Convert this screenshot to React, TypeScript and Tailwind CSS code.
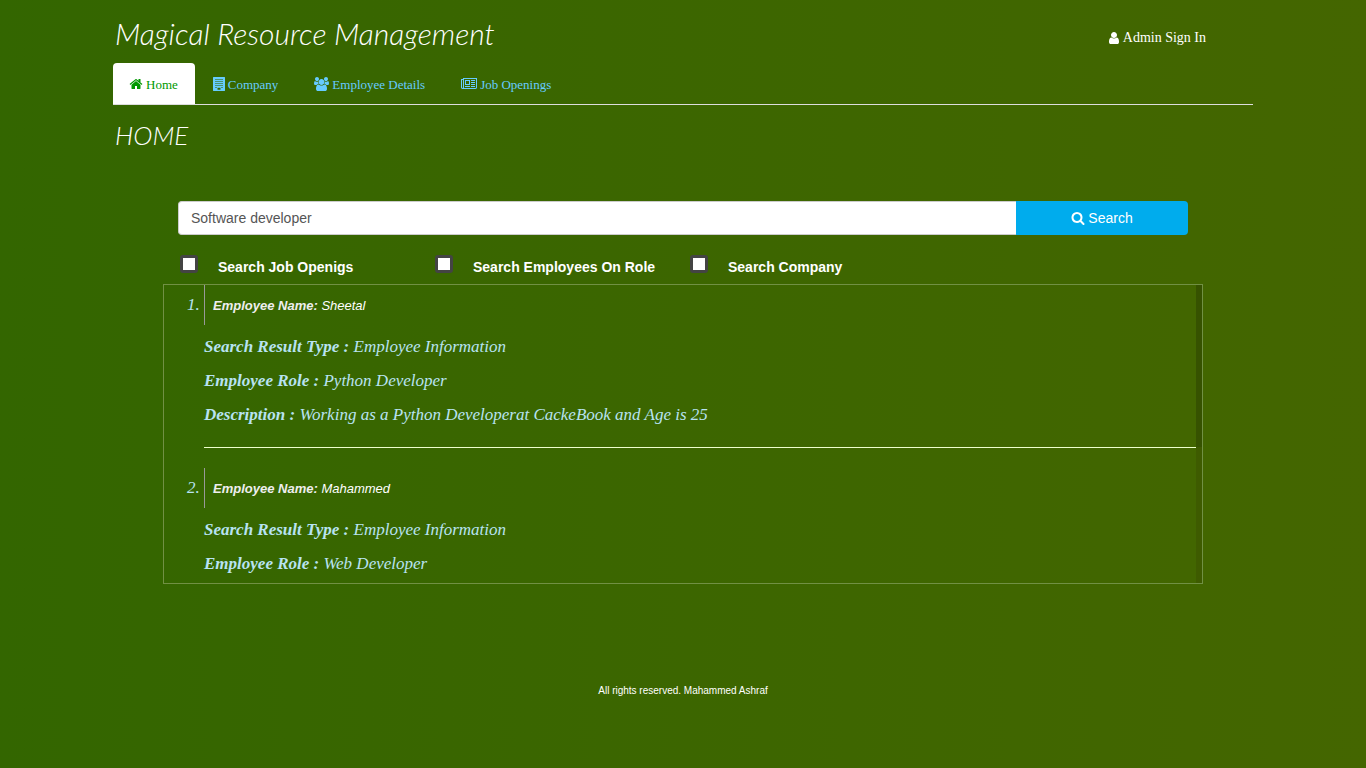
import { useState } from "react";

type IconProps = { width: number; d: string; className: string };

function Icon({ width, d, className }: IconProps) {
  return (
    <svg viewBox={`0 0 ${width} 1792`} fill="currentColor" fillRule="evenodd" aria-hidden="true" className={className}>
      <path d={d} />
    </svg>
  );
}

const homePath =
  "M1472 992v480q0 26-19 45t-45 19h-384v-384h-256v384h-384q-26 0-45-19t-19-45v-480q0-1 .5-3t.5-3l575-474 575 474q1 2 1 6zm223-69l-62 74q-8 9-21 11h-3q-13 0-21-7l-692-577-692 577q-12 8-24 7-13-2-21-11l-62-74q-8-10-7-23.5t11-21.5l719-599q32-26 76-26t76 26l244 204v-195q0-14 9-23t23-9h192q14 0 23 9t9 23v408l219 182q10 8 11 21.5t-7 23.5z";
const buildingPath =
  "M64 0h1408q26 0 45 19t19 45v1664q0 26-19 45t-45 19h-1408q-26 0-45-19t-19-45v-1664q0-26 19-45t45-19zM288 256v96h192v-96zM544 256v96h192v-96zM800 256v96h192v-96zM1056 256v96h192v-96zM288 512v96h192v-96zM544 512v96h192v-96zM800 512v96h192v-96zM1056 512v96h192v-96zM288 768v96h192v-96zM544 768v96h192v-96zM800 768v96h192v-96zM1056 768v96h192v-96zM288 1024v96h192v-96zM544 1024v96h192v-96zM800 1024v96h192v-96zM1056 1024v96h192v-96zM288 1280v96h192v-96zM1056 1280v96h192v-96zM576 1376v256h384v-256z";
const usersPath =
  "M593 896q-162 5-265 128h-134q-82 0-138-40.5t-56-118.5q0-353 124-353 6 0 43.5 21t97.5 42.5 119 21.5q67 0 133-23-5 37-5 66 0 139 81 256zm1071 637q0 120-73 189.5t-194 69.5h-874q-121 0-194-69.5t-73-189.5q0-53 3.5-103.5t14-109 26.5-108.5 43-97.5 62-81 85.5-53.5 111.5-20q10 0 43 21.5t73 48 107 48 135 21.5 135-21.5 107-48 73-48 43-21.5q61 0 111.5 20t85.5 53.5 62 81 43 97.5 26.5 108.5 14 109 3.5 103.5zm-1024-1277q0 106-75 181t-181 75-181-75-75-181 75-181 181-75 181 75 75 181zm704 384q0 159-112.5 271.5t-271.5 112.5-271.5-112.5-112.5-271.5 112.5-271.5 271.5-112.5 271.5 112.5 112.5 271.5zm576 225q0 78-56 118.5t-138 40.5h-134q-103-123-265-128 81-117 81-256 0-29-5-66 66 23 133 23 59 0 119-21.5t97.5-42.5 43.5-21q124 0 124 353zm-128-609q0 106-75 181t-181 75-181-75-75-181 75-181 181-75 181 75 75 181z";
const newsPath =
  "M1024 512h-384v384h384v-384zm128 640v128h-640v-128h640zm0-768v640h-640v-640h640zm640 768v128h-512v-128h512zm0-256v128h-512v-128h512zm0-256v128h-512v-128h512zm0-256v128h-512v-128h512zm-1536 960v-960h-128v960q0 26 19 45t45 19 45-19 19-45zm1664 0v-1088h-1536v1088q0 33-11 64h1483q26 0 45-19t19-45zm128-1216v1216q0 80-56 136t-136 56h-1664q-80 0-136-56t-56-136v-1088h256v-128h1792z";
const userPath =
  "M1536 1399q0 109-62.5 187t-150.5 78h-854q-88 0-150.5-78t-62.5-187q0-85 8.5-160.5t31.5-152 58.5-131 94-89 134.5-34.5q131 128 313 128t313-128q76 0 134.5 34.5t94 89 58.5 131 31.5 152 8.5 160.5zm-256-887q0 159-112.5 271.5t-271.5 112.5-271.5-112.5-112.5-271.5 112.5-271.5 271.5-112.5 271.5 112.5 112.5 271.5z";
const searchPath =
  "M1216 832q0-185-131.5-316.5t-316.5-131.5-316.5 131.5-131.5 316.5 131.5 316.5 316.5 131.5 316.5-131.5 131.5-316.5zm512 832q0 52-38 90t-90 38q-54 0-90-38l-343-342q-179 124-399 124-143 0-273.5-55.5t-225-150-150-225-55.5-273.5 55.5-273.5 150-225 225-150 273.5-55.5 273.5 55.5 225 150 150 225 55.5 273.5q0 220-124 399l343 343q37 37 37 90z";

const tabs = [
  { label: "Home", path: homePath, width: 1792, size: "h-[14px] w-[14px]", active: true },
  { label: "Company", path: buildingPath, width: 1536, size: "h-[14px] w-[12px]", active: false },
  { label: "Employee Details", path: usersPath, width: 1920, size: "h-[14px] w-[15px]", active: false },
  { label: "Job Openings", path: newsPath, width: 2048, size: "h-[14px] w-[16px]", active: false },
];

const filters = [
  { id: "filter-jobs", label: "Search Job Openigs" },
  { id: "filter-roles", label: "Search Employees On Role" },
  { id: "filter-company", label: "Search Company" },
];

const results = [
  {
    name: "Sheetal",
    details: [
      ["Search Result Type :", "Employee Information"],
      ["Employee Role :", "Python Developer"],
      ["Description :", "Working as a Python Developerat CackeBook and Age is 25"],
    ],
  },
  {
    name: "Mahammed",
    details: [
      ["Search Result Type :", "Employee Information"],
      ["Employee Role :", "Web Developer"],
    ],
  },
];

export default function App() {
  const [query, setQuery] = useState("Software developer");

  return (
    <div className="min-h-screen bg-linear-to-r from-[#336600] to-[#446600] font-['Liberation_Sans',sans-serif] text-sm text-white">
      <div className="mx-auto max-w-[1140px]">
        <header>
          <div className="flex h-[63px] items-start justify-between pt-4 pr-[47px] pl-0.5">
            <h1 className="font-['Lato',sans-serif] text-[30px] leading-[34px] font-light italic">Magical Resource Management</h1>
            <a href="#signin" className="flex items-center gap-0.5 pt-3 font-['Liberation_Serif',serif] text-sm leading-5">
              <Icon width={1792} d={userPath} className="h-[14px] w-[14px]" />
              Admin Sign In
            </a>
          </div>
          <nav className="flex gap-[3px] border-b border-[#dddddd] font-['Liberation_Serif',serif] text-[13px]">
            {tabs.map((tab) => (
              <a
                key={tab.label}
                href="#"
                aria-current={tab.active ? "page" : undefined}
                className={
                  tab.active
                    ? "flex h-[41px] items-center gap-[3px] rounded-t bg-white pr-[17px] pl-4 text-[#009900]"
                    : "flex h-[41px] items-center gap-[3px] rounded-t pr-[18px] pl-[15px] text-[#66ccff]"
                }
              >
                <Icon width={tab.width} d={tab.path} className={tab.size} />
                <span className="pt-1">{tab.label}</span>
              </a>
            ))}
          </nav>
        </header>

        <main>
          <h2 className="mt-[15px] pl-0.5 font-['Lato',sans-serif] text-[26px] leading-[30px] font-light italic">HOME</h2>

          <form className="mx-[65px] mt-[51px]" onSubmit={(e) => e.preventDefault()}>
            <div className="flex h-[34px]">
              <input
                type="text"
                aria-label="Search"
                value={query}
                onChange={(e) => setQuery(e.target.value)}
                className="min-w-0 flex-1 rounded-l border border-r-0 border-[#cccccc] bg-white px-3 text-sm text-[#555555]"
              />
              <button type="submit" className="flex w-[172px] items-center justify-center gap-[3px] rounded-r bg-[#00aced] text-sm text-white">
                <Icon width={1792} d={searchPath} className="h-[14px] w-[14px]" />
                Search
              </button>
            </div>
            <div className="mt-5 flex h-[29px] pl-0.5">
              {filters.map((filter) => (
                <div key={filter.id} className="flex w-[255px] items-start">
                  <input
                    id={filter.id}
                    type="checkbox"
                    className="h-[18px] w-[18px] appearance-none rounded-[3px] border-3 border-[#444444] bg-white checked:bg-[#00aced]"
                  />
                  <label htmlFor={filter.id} className="pt-0.5 pl-5 leading-5 font-bold">
                    {filter.label}
                  </label>
                </div>
              ))}
            </div>
          </form>

          <section aria-label="Search results" className="mx-[50px] flex h-[300px] border border-[#719044]">
            <ol className="min-w-0 flex-1 list-decimal overflow-y-auto pl-10 font-['Liberation_Serif',serif] text-[17px] text-[#b8e3f2] italic [scrollbar-width:none]">
              {results.map((result, index) => (
                <li key={result.name}>
                  <h3 className="border-l border-[#999999] pt-0.5 pl-2 font-['Liberation_Sans',sans-serif] text-[13px] leading-[38px] text-white">
                    <b className="text-[#eeeeee]">Employee Name:</b> {result.name}
                  </h3>
                  <div className="flex flex-col gap-2.5 pt-2.5 leading-6">
                    {result.details.map(([term, value]) => (
                      <p key={term}>
                        <b>{term}</b> {value}
                      </p>
                    ))}
                  </div>
                  {index < results.length - 1 && <hr className="my-5 border-t border-[#eeffcc]" />}
                </li>
              ))}
            </ol>
            <div className="w-1.5 bg-[#3e5b00]">
              <div className="h-[162px] bg-[#365200]" />
            </div>
          </section>
        </main>

        <footer className="pt-[99px] pb-4 text-center text-[10px] leading-4">All rights reserved. Mahammed Ashraf</footer>
      </div>
    </div>
  );
}
